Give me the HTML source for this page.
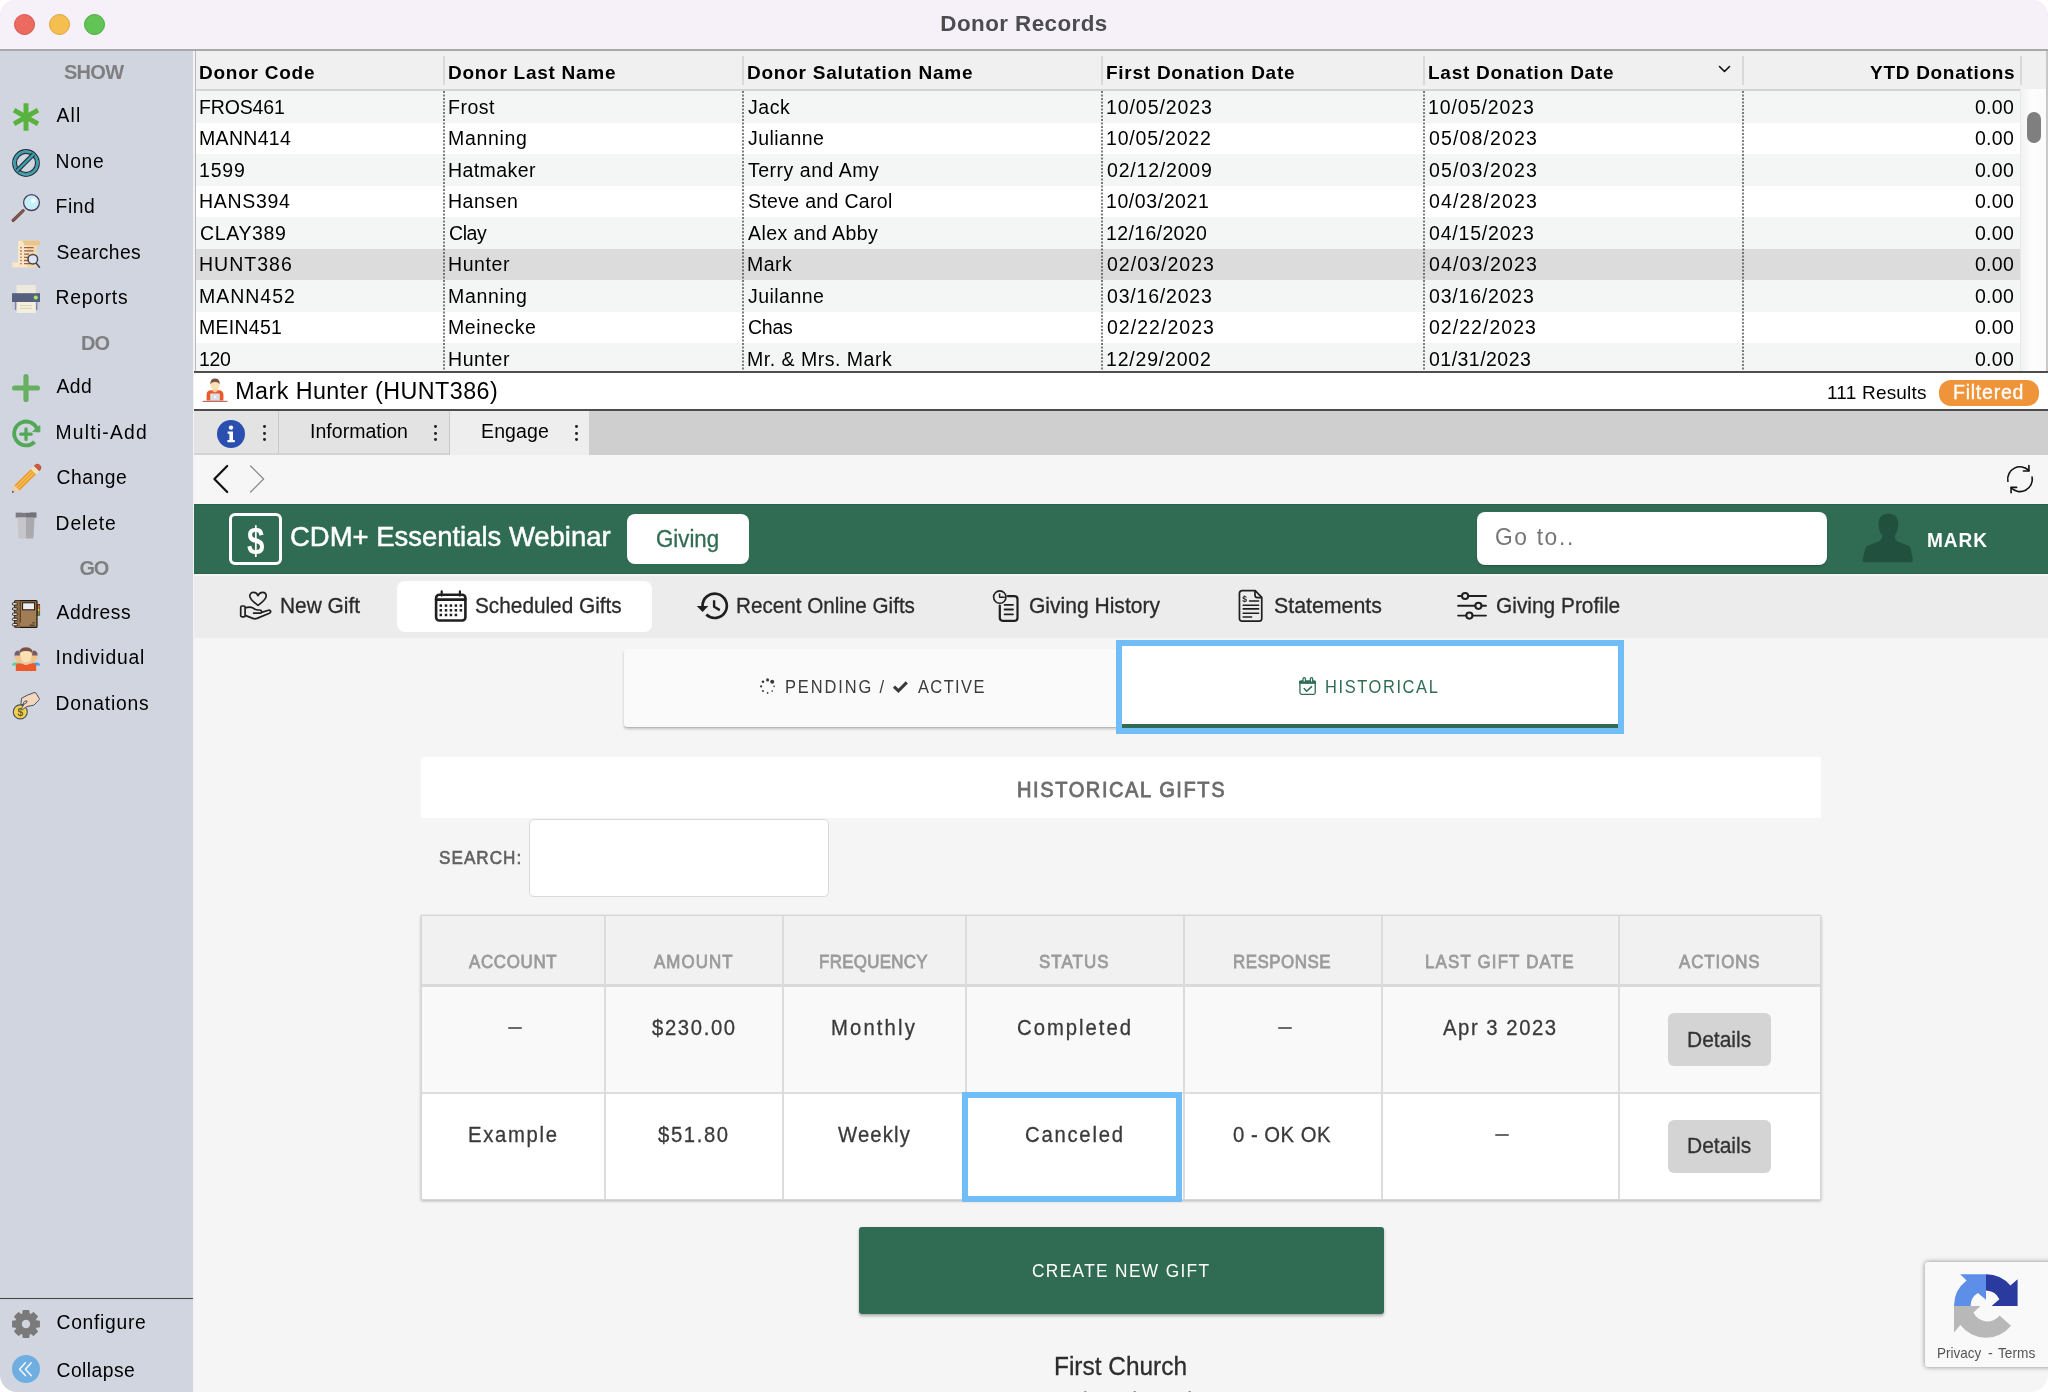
<!DOCTYPE html>
<html lang="en"><head><meta charset="utf-8"><title>Donor Records</title>
<style>

*{box-sizing:border-box;margin:0;padding:0}
html,body{width:2048px;height:1392px;overflow:hidden;background:#fff}
body{font-family:"Liberation Sans",sans-serif;position:relative;color:#000}
.win{will-change:transform;position:absolute;left:0;top:0;width:2048px;height:1392px;border-radius:15px 15px 17px 17px;background:#f5f5f5;overflow:hidden}
.a{position:absolute}
.t{position:absolute;white-space:nowrap}
svg{position:absolute;overflow:visible}

</style></head>
<body>
<div class="win">
<div class="a" style="left:0;top:0;width:2048px;height:49px;background:#f6f1f8"></div>
<div class="a" style="left:0;top:49px;width:2048px;height:2px;background:#a9a9aa"></div>
<div class="a" style="left:14.0px;top:14px;width:21px;height:21px;border-radius:50%;background:#ec6a5f;border:1px solid #d9534a"></div>
<div class="a" style="left:49.0px;top:14px;width:21px;height:21px;border-radius:50%;background:#f4bf50;border:1px solid #dba43a"></div>
<div class="a" style="left:84.0px;top:14px;width:21px;height:21px;border-radius:50%;background:#61c455;border:1px solid #4aa83f"></div>
<div class="t" style="top:9.1px;font-size:22.4px;line-height:29px;font-weight:700;color:#4c4c4e;letter-spacing:0.43px;left:724.0px;width:600px;text-align:center;">Donor Records</div>
<div class="a" style="left:0;top:51px;width:193px;height:1361px;background:#d1d5df"></div>
<div class="a" style="left:193px;top:51px;width:2px;height:1361px;background:#f3f3f5"></div>
<div class="a" style="left:0;top:1298px;width:193px;height:1px;background:#47484c;box-shadow:0 0 1px rgba(60,60,66,.5)"></div>
<div class="t" style="top:58.9px;font-size:20px;line-height:26px;font-weight:700;color:#7f7f7f;letter-spacing:-0.65px;left:63.9px;">SHOW</div>
<div class="t" style="top:330.1px;font-size:20px;line-height:26px;font-weight:700;color:#7f7f7f;letter-spacing:-0.94px;left:80.9px;">DO</div>
<div class="t" style="top:555.3px;font-size:20px;line-height:26px;font-weight:700;color:#7f7f7f;letter-spacing:-1.50px;left:79.6px;">GO</div>
<svg style="left:11.9px;top:103.0px" width="28" height="28" viewBox="0 0 28 28"><g stroke="#58b33e" stroke-width="4.9" stroke-linecap="butt"><path d="M14 0.2V27.8M2 7.1L26 20.9M2 20.9L26 7.1"/></g></svg>
<div class="t" style="top:103.4px;font-size:19.3px;line-height:25px;letter-spacing:1.12px;left:56.6px;">All</div>
<svg style="left:11.9px;top:148.5px" width="28" height="28" viewBox="0 0 28 28"><circle cx="14" cy="14" r="13.2" fill="none" stroke="#22343a" stroke-width="1.4"/><circle cx="14" cy="14" r="11.3" fill="none" stroke="#3f9fae" stroke-width="2.6"/><circle cx="14" cy="14" r="9.6" fill="none" stroke="#22343a" stroke-width="1.2"/><path d="M21.6 5.2L5.2 21.6" stroke="#22343a" stroke-width="4.6"/><path d="M22 4.8L4.8 22" stroke="#3f9fae" stroke-width="2.4"/></svg>
<div class="t" style="top:148.9px;font-size:19.3px;line-height:25px;letter-spacing:0.67px;left:55.6px;">None</div>
<svg style="left:11.9px;top:194.0px" width="28" height="28" viewBox="0 0 28 28"><path d="M1.2 26.3L11.2 16.6" stroke="#6a4540" stroke-width="3.2" stroke-linecap="round"/><path d="M1.6 26L11 16.8" stroke="#8a5a4c" stroke-width="1.6" stroke-linecap="round"/><circle cx="19.5" cy="8.6" r="7.9" fill="#c5f0fa" stroke="#4a3c5a" stroke-width="1.3"/><circle cx="21.3" cy="6.8" r="2.3" fill="#fff"/></svg>
<div class="t" style="top:194.4px;font-size:19.3px;line-height:25px;letter-spacing:0.54px;left:55.6px;">Find</div>
<svg style="left:11.9px;top:239.5px" width="28" height="28" viewBox="0 0 28 28"><path d="M6 2.5Q6 0.6 8 0.6H26Q28 0.6 28 2.6V5.2H24.5V25.5Q24.5 27.6 22.5 27.6H2Q0.3 27.6 0.3 25.6V22.4H6Z" fill="#fbe7c6"/><path d="M15 0.6H26Q28 0.6 28 2.6V5.2H24.5V25.5Q24.5 27.6 22.5 27.6H15Z" fill="#f2d2a0" opacity=".75"/><path d="M8 0.6H26Q28 0.6 28 2.6V5.2H12Q12 0.6 8 0.6Z" fill="#e8c48e"/><g stroke="#9a5f45" stroke-width="1.3"><path d="M12 7.7H21.5M12 10.9H21.5M12 14.1H17M12 17.3H16M12 20.5H16M12 23.7H19"/></g><g fill="#9a5f45"><circle cx="9" cy="7.7" r=".8"/><circle cx="9" cy="10.9" r=".8"/><circle cx="9" cy="14.1" r=".8"/><circle cx="9" cy="17.3" r=".8"/><circle cx="9" cy="20.5" r=".8"/><circle cx="9" cy="23.7" r=".8"/></g><path d="M24 23L27.5 27.2" stroke="#3f444d" stroke-width="1.6" stroke-linecap="round"/><circle cx="20.8" cy="19.2" r="4.8" fill="#dfe3f2" stroke="#3f444d" stroke-width="1.5"/></svg>
<div class="t" style="top:239.9px;font-size:19.3px;line-height:25px;letter-spacing:0.37px;left:56.6px;">Searches</div>
<svg style="left:11.9px;top:285.0px" width="28" height="28" viewBox="0 0 28 28"><rect x="4.6" y="0" width="19.2" height="9" fill="#edeadb"/><rect x="0" y="17" width="28" height="7" fill="#cfd0cf"/><rect x="2.8" y="17" width="1.8" height="8" fill="#7b86bd"/><rect x="23.6" y="17" width="1.8" height="8" fill="#7b86bd"/><rect x="0" y="8.2" width="28" height="8.8" fill="#565f7e"/><rect x="4.6" y="17" width="19.2" height="11" fill="#f3efdc"/><path d="M8 20.6H20M8 23.4H20" stroke="#d6d2b2" stroke-width="1"/><circle cx="23.8" cy="12.6" r="2.1" fill="#a5e861"/></svg>
<div class="t" style="top:285.4px;font-size:19.3px;line-height:25px;letter-spacing:0.75px;left:55.6px;">Reports</div>
<svg style="left:11.9px;top:374.0px" width="28" height="28" viewBox="0 0 28 28"><path d="M14 2.6V25.4M2.6 14H25.4" stroke="#67b061" stroke-width="5.2" stroke-linecap="round"/></svg>
<div class="t" style="top:374.4px;font-size:19.3px;line-height:25px;letter-spacing:0.41px;left:56.6px;">Add</div>
<svg style="left:11.9px;top:419.5px" width="28" height="28" viewBox="0 0 28 28"><path d="M22.6 21.8A11.9 11.9 0 1 1 25.8 11.2" fill="none" stroke="#52a856" stroke-width="3.8"/><path d="M20.6 11.6L27.9 5.6V11.9Z" fill="#52a856" stroke="#52a856" stroke-width=".8" stroke-linejoin="round"/><path d="M14 9V19.4M8.8 14.2H19.2" stroke="#52a856" stroke-width="3.3" stroke-linecap="round"/></svg>
<div class="t" style="top:419.9px;font-size:19.3px;line-height:25px;letter-spacing:1.21px;left:55.6px;">Multi-Add</div>
<svg style="left:11.9px;top:465.0px" width="28" height="28" viewBox="0 0 28 28"><g transform="rotate(-44.5 14 14)"><path d="M-5.8 14L1.6 10.4V17.6Z" fill="#f6cfa0"/><path d="M-5.8 14L-3.6 12.95V15.05Z" fill="#3a3f48"/><rect x="1.4" y="10.4" width="23.2" height="7.2" fill="#ee9a33"/><rect x="1.4" y="12.2" width="23.2" height="1.1" fill="#f2cc55"/><rect x="1.4" y="14.7" width="23.2" height="1.1" fill="#f2cc55"/><rect x="24.6" y="10.2" width="4.2" height="7.6" fill="#f0ecc4"/><path d="M25.8 10.2V17.8M27.4 10.2V17.8" stroke="#e1d9a0" stroke-width=".6"/><path d="M28.8 10.2H30A3.8 3.8 0 0 1 30 17.8H28.8Z" fill="#c85a48"/></g></svg>
<div class="t" style="top:465.4px;font-size:19.3px;line-height:25px;letter-spacing:0.52px;left:56.6px;">Change</div>
<svg style="left:11.9px;top:511.29999999999995px" width="28" height="28" viewBox="0 0 28 28"><rect x="3.7" y="1.6" width="20.6" height="5" fill="#7c7a82"/><rect x="14" y="1.6" width="10.3" height="5" fill="#73717a"/><path d="M5.4 6.6H14V27.6H6.6Z" fill="#c6c5c9"/><path d="M14 6.6H22.6L21.4 27.6H14Z" fill="#aaa9ae"/><rect x="10" y="0.6" width="8" height="1" fill="#d8d6d2"/></svg>
<div class="t" style="top:510.9px;font-size:19.3px;line-height:25px;letter-spacing:0.87px;left:55.6px;">Delete</div>
<svg style="left:11.9px;top:599.5px" width="28" height="28" viewBox="0 0 28 28"><rect x="25" y="4.4" width="2.8" height="10.8" fill="#8a5a34" stroke="#20160e" stroke-width=".5"/><rect x="25.6" y="5.2" width="1.8" height="2.8" fill="#e86a2a"/><rect x="25.6" y="8.6" width="1.8" height="2.8" fill="#f2c233"/><rect x="25.6" y="12" width="1.8" height="2.8" fill="#3fae49"/><rect x="2.6" y="0.6" width="22.4" height="26.8" rx="1" fill="#a07d55" stroke="#20160e" stroke-width="1.2"/><rect x="2.6" y="0.6" width="5.6" height="26.8" fill="#8c6b45"/><path d="M8.4 1.4V22.6" stroke="#5f4428" stroke-width="1.2"/><rect x="10.6" y="2.8" width="12" height="7" fill="#eceff2" stroke="#20160e" stroke-width="1"/><path d="M17.6 25.2H22.8M20.4 22.8H22.8" stroke="#3a2a18" stroke-width="1"/><g fill="#e8eaec" stroke="#20160e" stroke-width=".9"><rect x="0.4" y="2.6" width="5" height="2.4" rx="1.2"/><rect x="0.4" y="7.8" width="5" height="2.4" rx="1.2"/><rect x="0.4" y="13" width="5" height="2.4" rx="1.2"/><rect x="0.4" y="18.2" width="5" height="2.4" rx="1.2"/><rect x="0.4" y="23.4" width="5" height="2.4" rx="1.2"/></g></svg>
<div class="t" style="top:599.9px;font-size:19.3px;line-height:25px;letter-spacing:0.55px;left:56.6px;">Address</div>
<svg style="left:11.9px;top:645.0px" width="28" height="28" viewBox="0 0 28 28"><path d="M0 20.6Q0 17.4 3.4 17.4H8V20.6Z" fill="#5fd48a"/><path d="M28 20.6Q28 17.4 24.6 17.4H20V20.6Z" fill="#45a4f2"/><ellipse cx="6.6" cy="11.6" rx="4" ry="4.8" fill="#f3c48a"/><path d="M2.4 10.6Q2.4 5.6 6.8 5.6L8 10.6Z" fill="#6f6076"/><ellipse cx="21.4" cy="11.6" rx="4" ry="4.8" fill="#f3c48a"/><path d="M25.6 10.6Q25.6 5.6 21.2 5.6L20 10.6Z" fill="#7a5a62"/><rect x="5" y="13.6" width="4" height="4.4" fill="#f3c48a"/><rect x="19" y="13.6" width="4" height="4.4" fill="#f3c48a"/><path d="M3.8 25.4V20.6Q3.8 18.4 6.4 18.4H21.6Q24.2 18.4 24.2 20.6V25.4Q24.2 26 23.4 26H4.6Q3.8 26 3.8 25.4Z" fill="#ec5a2c"/><path d="M10.4 15.6H17.6V18.6Q14 21.6 10.4 18.6Z" fill="#f5c896"/><ellipse cx="14" cy="10.4" rx="5.6" ry="6.8" fill="#fae2b4"/><path d="M7 9.4Q6.6 2.4 14 2.2Q21.4 2.4 21 9.4Q19.4 5.8 14 6Q8.6 5.8 7 9.4Z" fill="#7b5145"/></svg>
<div class="t" style="top:645.4px;font-size:19.3px;line-height:25px;letter-spacing:0.80px;left:55.6px;">Individual</div>
<svg style="left:11.9px;top:690.5px" width="28" height="28" viewBox="0 0 28 28"><circle cx="8.3" cy="20.9" r="7" fill="#f2d04a" stroke="#46525c" stroke-width="1.1"/><text x="5.4" y="24.6" font-family="Liberation Sans, sans-serif" font-size="10.5" font-weight="700" fill="#6a6330">$</text><path d="M8.8 13.6L9.6 7.2L15.4 4.2L22 1.6Q23.2 1.2 24 2.2L27.2 7.4Q27.6 8.4 26.8 9.2L21.8 14.2L14.6 15.6L10.6 18.6Q9.6 18.8 9.6 17.6L11.8 13.4Z" fill="#f5d7be" stroke="#46525c" stroke-width="1" stroke-linejoin="round"/><ellipse cx="13.2" cy="11.4" rx="2.2" ry="1.1" transform="rotate(-35 13.2 11.4)" fill="#d1d5df" stroke="#46525c" stroke-width=".9"/></svg>
<div class="t" style="top:690.9px;font-size:19.3px;line-height:25px;letter-spacing:0.78px;left:55.6px;">Donations</div>
<svg style="left:11.9px;top:1310.0px" width="28" height="28" viewBox="0 0 28 28"><path fill-rule="evenodd" d="M11.16 0.70L16.84 0.70L17.17 4.10L18.76 4.75L21.40 2.59L25.41 6.60L23.25 9.24L23.90 10.83L27.30 11.16L27.30 16.84L23.90 17.17L23.25 18.76L25.41 21.40L21.40 25.41L18.76 23.25L17.17 23.90L16.84 27.30L11.16 27.30L10.83 23.90L9.24 23.25L6.60 25.41L2.59 21.40L4.75 18.76L4.10 17.17L0.70 16.84L0.70 11.16L4.10 10.83L4.75 9.24L2.59 6.60L6.60 2.59L9.24 4.75L10.83 4.10ZM14 9.2A4.8 4.8 0 1 0 14 18.8A4.8 4.8 0 1 0 14 9.2Z" fill="#7a7a7a" stroke="#7a7a7a" stroke-width="1.2" stroke-linejoin="round"/></svg>
<div class="t" style="top:1310.4px;font-size:19.3px;line-height:25px;letter-spacing:0.69px;left:56.6px;">Configure</div>
<svg style="left:11.9px;top:1355.4px" width="28" height="28" viewBox="0 0 28 28"><circle cx="14" cy="14" r="14" fill="#6faee0"/><path d="M13.4 7.8L7.6 14.2L13.4 20.6M19.2 7.8L13.4 14.2L19.2 20.6" fill="none" stroke="#f2f8fd" stroke-width="1.5" stroke-linecap="round" stroke-linejoin="round"/></svg>
<div class="t" style="top:1357.6px;font-size:19.3px;line-height:25px;letter-spacing:0.44px;left:56.6px;">Collapse</div>
<div class="a" style="left:195px;top:51px;width:1853px;height:320px;background:#fff;border-left:1px solid #b9b9b9"></div>
<div class="a" style="left:196px;top:51px;width:1852px;height:39px;background:#f0f0f0"></div>
<div class="a" style="left:196px;top:89px;width:1852px;height:2px;background:#d3d3d3"></div>
<div class="a" style="left:196px;top:91.0px;width:1824px;height:31.5px;background:#f4f5f5"></div>
<div class="a" style="left:196px;top:122.5px;width:1824px;height:31.5px;background:#fff"></div>
<div class="a" style="left:196px;top:154.0px;width:1824px;height:31.5px;background:#f4f5f5"></div>
<div class="a" style="left:196px;top:185.5px;width:1824px;height:31.5px;background:#fff"></div>
<div class="a" style="left:196px;top:217.0px;width:1824px;height:31.5px;background:#f4f5f5"></div>
<div class="a" style="left:196px;top:248.5px;width:1824px;height:31.5px;background:#dcdcdc"></div>
<div class="a" style="left:196px;top:280.0px;width:1824px;height:31.5px;background:#f4f5f5"></div>
<div class="a" style="left:196px;top:311.5px;width:1824px;height:31.5px;background:#fff"></div>
<div class="a" style="left:196px;top:343.0px;width:1824px;height:28px;background:#f4f5f5"></div>
<div class="a" style="left:2020px;top:51px;width:28px;height:320px;background:linear-gradient(90deg,#f2f2f2,#fdfdfd 40%,#fafafa);border-left:1px solid #e8e8e8"></div>
<div class="a" style="left:2020px;top:51px;width:28px;height:38px;background:#f0f0f0"></div>
<div class="a" style="left:2027px;top:112px;width:14px;height:31px;border-radius:7px;background:#7f7f7f"></div>
<div class="a" style="left:2046px;top:51px;width:2px;height:320px;background:#c8c8c8"></div>
<div class="a" style="left:2020px;top:56px;width:2px;height:29px;background:#d9d9d9"></div>
<div class="a" style="left:443px;top:56px;width:2px;height:29px;background:#d9d9d9"></div>
<div class="a" style="left:443px;top:91px;width:2px;height:280px;background:repeating-linear-gradient(180deg,rgba(50,50,50,0.62) 0px,rgba(50,50,50,0.62) 1px,rgba(50,50,50,0.62) 1px,rgba(50,50,50,0.62) 2px,rgba(50,50,50,0) 2px,rgba(50,50,50,0) 3px,rgba(50,50,50,0.31) 3px,rgba(50,50,50,0.31) 4px,rgba(50,50,50,0.62) 4px,rgba(50,50,50,0.62) 5px,rgba(50,50,50,0.31) 5px,rgba(50,50,50,0.31) 6px,rgba(50,50,50,0) 6px,rgba(50,50,50,0) 7px)"></div>
<div class="a" style="left:742px;top:56px;width:2px;height:29px;background:#d9d9d9"></div>
<div class="a" style="left:742px;top:91px;width:2px;height:280px;background:repeating-linear-gradient(180deg,rgba(50,50,50,0.62) 0px,rgba(50,50,50,0.62) 1px,rgba(50,50,50,0.62) 1px,rgba(50,50,50,0.62) 2px,rgba(50,50,50,0) 2px,rgba(50,50,50,0) 3px,rgba(50,50,50,0.31) 3px,rgba(50,50,50,0.31) 4px,rgba(50,50,50,0.62) 4px,rgba(50,50,50,0.62) 5px,rgba(50,50,50,0.31) 5px,rgba(50,50,50,0.31) 6px,rgba(50,50,50,0) 6px,rgba(50,50,50,0) 7px)"></div>
<div class="a" style="left:1101px;top:56px;width:2px;height:29px;background:#d9d9d9"></div>
<div class="a" style="left:1101px;top:91px;width:2px;height:280px;background:repeating-linear-gradient(180deg,rgba(50,50,50,0.62) 0px,rgba(50,50,50,0.62) 1px,rgba(50,50,50,0.62) 1px,rgba(50,50,50,0.62) 2px,rgba(50,50,50,0) 2px,rgba(50,50,50,0) 3px,rgba(50,50,50,0.31) 3px,rgba(50,50,50,0.31) 4px,rgba(50,50,50,0.62) 4px,rgba(50,50,50,0.62) 5px,rgba(50,50,50,0.31) 5px,rgba(50,50,50,0.31) 6px,rgba(50,50,50,0) 6px,rgba(50,50,50,0) 7px)"></div>
<div class="a" style="left:1423px;top:56px;width:2px;height:29px;background:#d9d9d9"></div>
<div class="a" style="left:1423px;top:91px;width:2px;height:280px;background:repeating-linear-gradient(180deg,rgba(50,50,50,0.62) 0px,rgba(50,50,50,0.62) 1px,rgba(50,50,50,0.62) 1px,rgba(50,50,50,0.62) 2px,rgba(50,50,50,0) 2px,rgba(50,50,50,0) 3px,rgba(50,50,50,0.31) 3px,rgba(50,50,50,0.31) 4px,rgba(50,50,50,0.62) 4px,rgba(50,50,50,0.62) 5px,rgba(50,50,50,0.31) 5px,rgba(50,50,50,0.31) 6px,rgba(50,50,50,0) 6px,rgba(50,50,50,0) 7px)"></div>
<div class="a" style="left:1742px;top:56px;width:2px;height:29px;background:#d9d9d9"></div>
<div class="a" style="left:1742px;top:91px;width:2px;height:280px;background:repeating-linear-gradient(180deg,rgba(50,50,50,0.62) 0px,rgba(50,50,50,0.62) 1px,rgba(50,50,50,0.62) 1px,rgba(50,50,50,0.62) 2px,rgba(50,50,50,0) 2px,rgba(50,50,50,0) 3px,rgba(50,50,50,0.31) 3px,rgba(50,50,50,0.31) 4px,rgba(50,50,50,0.62) 4px,rgba(50,50,50,0.62) 5px,rgba(50,50,50,0.31) 5px,rgba(50,50,50,0.31) 6px,rgba(50,50,50,0) 6px,rgba(50,50,50,0) 7px)"></div>
<div class="t" style="top:94.7px;font-size:19.5px;line-height:25px;letter-spacing:-0.14px;left:199.0px;">FROS461</div>
<div class="t" style="top:94.7px;font-size:19.5px;line-height:25px;letter-spacing:0.50px;left:448.0px;">Frost</div>
<div class="t" style="top:94.7px;font-size:19.5px;line-height:25px;letter-spacing:0.55px;left:748.0px;">Jack</div>
<div class="t" style="top:94.7px;font-size:19.5px;line-height:25px;letter-spacing:0.92px;left:1106.0px;">10/05/2023</div>
<div class="t" style="top:94.7px;font-size:19.5px;line-height:25px;letter-spacing:0.92px;left:1428.0px;">10/05/2023</div>
<div class="t" style="top:94.7px;font-size:19.5px;line-height:25px;letter-spacing:0.30px;right:33.9px;">0.00</div>
<div class="t" style="top:126.2px;font-size:19.5px;line-height:25px;letter-spacing:0.32px;left:199.0px;">MANN414</div>
<div class="t" style="top:126.2px;font-size:19.5px;line-height:25px;letter-spacing:0.67px;left:448.0px;">Manning</div>
<div class="t" style="top:126.2px;font-size:19.5px;line-height:25px;letter-spacing:0.46px;left:748.0px;">Julianne</div>
<div class="t" style="top:126.2px;font-size:19.5px;line-height:25px;letter-spacing:0.80px;left:1106.0px;">10/05/2022</div>
<div class="t" style="top:126.2px;font-size:19.5px;line-height:25px;letter-spacing:1.14px;left:1429.0px;">05/08/2023</div>
<div class="t" style="top:126.2px;font-size:19.5px;line-height:25px;letter-spacing:0.30px;right:33.9px;">0.00</div>
<div class="t" style="top:157.7px;font-size:19.5px;line-height:25px;letter-spacing:0.82px;left:199.0px;">1599</div>
<div class="t" style="top:157.7px;font-size:19.5px;line-height:25px;letter-spacing:0.42px;left:448.0px;">Hatmaker</div>
<div class="t" style="top:157.7px;font-size:19.5px;line-height:25px;letter-spacing:0.51px;left:748.0px;">Terry and Amy</div>
<div class="t" style="top:157.7px;font-size:19.5px;line-height:25px;letter-spacing:0.80px;left:1107.0px;">02/12/2009</div>
<div class="t" style="top:157.7px;font-size:19.5px;line-height:25px;letter-spacing:1.14px;left:1429.0px;">05/03/2023</div>
<div class="t" style="top:157.7px;font-size:19.5px;line-height:25px;letter-spacing:0.30px;right:33.9px;">0.00</div>
<div class="t" style="top:189.2px;font-size:19.5px;line-height:25px;letter-spacing:0.69px;left:199.0px;">HANS394</div>
<div class="t" style="top:189.2px;font-size:19.5px;line-height:25px;letter-spacing:0.53px;left:448.0px;">Hansen</div>
<div class="t" style="top:189.2px;font-size:19.5px;line-height:25px;letter-spacing:0.32px;left:748.0px;">Steve and Carol</div>
<div class="t" style="top:189.2px;font-size:19.5px;line-height:25px;letter-spacing:0.58px;left:1106.0px;">10/03/2021</div>
<div class="t" style="top:189.2px;font-size:19.5px;line-height:25px;letter-spacing:1.14px;left:1429.0px;">04/28/2023</div>
<div class="t" style="top:189.2px;font-size:19.5px;line-height:25px;letter-spacing:0.30px;right:33.9px;">0.00</div>
<div class="t" style="top:220.7px;font-size:19.5px;line-height:25px;letter-spacing:0.64px;left:200.0px;">CLAY389</div>
<div class="t" style="top:220.7px;font-size:19.5px;line-height:25px;letter-spacing:-0.42px;left:449.0px;">Clay</div>
<div class="t" style="top:220.7px;font-size:19.5px;line-height:25px;letter-spacing:0.42px;left:748.0px;">Alex and Abby</div>
<div class="t" style="top:220.7px;font-size:19.5px;line-height:25px;letter-spacing:0.36px;left:1106.0px;">12/16/2020</div>
<div class="t" style="top:220.7px;font-size:19.5px;line-height:25px;letter-spacing:0.80px;left:1429.0px;">04/15/2023</div>
<div class="t" style="top:220.7px;font-size:19.5px;line-height:25px;letter-spacing:0.30px;right:33.9px;">0.00</div>
<div class="t" style="top:252.2px;font-size:19.5px;line-height:25px;letter-spacing:1.02px;left:199.0px;">HUNT386</div>
<div class="t" style="top:252.2px;font-size:19.5px;line-height:25px;letter-spacing:0.59px;left:448.0px;">Hunter</div>
<div class="t" style="top:252.2px;font-size:19.5px;line-height:25px;letter-spacing:0.47px;left:747.0px;">Mark</div>
<div class="t" style="top:252.2px;font-size:19.5px;line-height:25px;letter-spacing:1.03px;left:1107.0px;">02/03/2023</div>
<div class="t" style="top:252.2px;font-size:19.5px;line-height:25px;letter-spacing:1.14px;left:1429.0px;">04/03/2023</div>
<div class="t" style="top:252.2px;font-size:19.5px;line-height:25px;letter-spacing:0.30px;right:33.9px;">0.00</div>
<div class="t" style="top:283.7px;font-size:19.5px;line-height:25px;letter-spacing:0.98px;left:199.0px;">MANN452</div>
<div class="t" style="top:283.7px;font-size:19.5px;line-height:25px;letter-spacing:0.67px;left:448.0px;">Manning</div>
<div class="t" style="top:283.7px;font-size:19.5px;line-height:25px;letter-spacing:0.46px;left:748.0px;">Juilanne</div>
<div class="t" style="top:283.7px;font-size:19.5px;line-height:25px;letter-spacing:0.80px;left:1107.0px;">03/16/2023</div>
<div class="t" style="top:283.7px;font-size:19.5px;line-height:25px;letter-spacing:0.80px;left:1429.0px;">03/16/2023</div>
<div class="t" style="top:283.7px;font-size:19.5px;line-height:25px;letter-spacing:0.30px;right:33.9px;">0.00</div>
<div class="t" style="top:315.2px;font-size:19.5px;line-height:25px;letter-spacing:0.26px;left:199.0px;">MEIN451</div>
<div class="t" style="top:315.2px;font-size:19.5px;line-height:25px;letter-spacing:0.63px;left:448.0px;">Meinecke</div>
<div class="t" style="top:315.2px;font-size:19.5px;line-height:25px;letter-spacing:-0.26px;left:748.0px;">Chas</div>
<div class="t" style="top:315.2px;font-size:19.5px;line-height:25px;letter-spacing:1.03px;left:1107.0px;">02/22/2023</div>
<div class="t" style="top:315.2px;font-size:19.5px;line-height:25px;letter-spacing:1.03px;left:1429.0px;">02/22/2023</div>
<div class="t" style="top:315.2px;font-size:19.5px;line-height:25px;letter-spacing:0.30px;right:33.9px;">0.00</div>
<div class="t" style="top:346.7px;font-size:19.5px;line-height:25px;letter-spacing:-0.35px;left:199.0px;">120</div>
<div class="t" style="top:346.7px;font-size:19.5px;line-height:25px;letter-spacing:0.59px;left:448.0px;">Hunter</div>
<div class="t" style="top:346.7px;font-size:19.5px;line-height:25px;letter-spacing:0.51px;left:747.0px;">Mr. &amp; Mrs. Mark</div>
<div class="t" style="top:346.7px;font-size:19.5px;line-height:25px;letter-spacing:0.80px;left:1106.0px;">12/29/2002</div>
<div class="t" style="top:346.7px;font-size:19.5px;line-height:25px;letter-spacing:0.47px;left:1429.0px;">01/31/2023</div>
<div class="t" style="top:346.7px;font-size:19.5px;line-height:25px;letter-spacing:0.30px;right:33.9px;">0.00</div>
<div class="t" style="top:59.5px;font-size:19px;line-height:25px;font-weight:700;letter-spacing:0.76px;left:199.0px;">Donor Code</div>
<div class="t" style="top:59.5px;font-size:19px;line-height:25px;font-weight:700;letter-spacing:0.73px;left:448.0px;">Donor Last Name</div>
<div class="t" style="top:59.5px;font-size:19px;line-height:25px;font-weight:700;letter-spacing:0.77px;left:747.0px;">Donor Salutation Name</div>
<div class="t" style="top:59.5px;font-size:19px;line-height:25px;font-weight:700;letter-spacing:0.74px;left:1106.0px;">First Donation Date</div>
<div class="t" style="top:59.5px;font-size:19px;line-height:25px;font-weight:700;letter-spacing:0.73px;left:1428.0px;">Last Donation Date</div>
<div class="t" style="top:59.5px;font-size:19px;line-height:25px;font-weight:700;letter-spacing:0.70px;right:32.7px;">YTD Donations</div>
<svg style="left:1717.6px;top:65.2px" width="13" height="9" viewBox="0 0 13 9"><path d="M1.5 1.5L6.5 6.5L11.5 1.5" fill="none" stroke="#111" stroke-width="1.6" stroke-linecap="round" stroke-linejoin="round"/></svg>
<div class="a" style="left:194px;top:371px;width:1854px;height:2px;background:#4d4d4d"></div>
<div class="a" style="left:194px;top:373px;width:1854px;height:36px;background:#fff"></div>
<div class="a" style="left:194px;top:409px;width:1854px;height:2px;background:#4d4d4d"></div>
<svg style="left:202px;top:377.6px" width="26" height="25" viewBox="0 0 26 25"><path d="M4.6 22.6V16.8Q4.6 12.2 9.2 12.2H16.8Q21.4 12.2 21.4 16.8V22.6Z" fill="#ec5a2c"/><path d="M10.6 10.4H15.4V13Q13 15.4 10.6 13Z" fill="#f5c896"/><ellipse cx="13" cy="7" rx="4.4" ry="5" fill="#fae2b4"/><path d="M8.4 6.4Q8 0.6 13 0.6Q18 0.6 17.6 6.4Q16.4 3.8 13 4Q9.6 3.8 8.4 6.4Z" fill="#7b5145"/><rect x="8.2" y="15.4" width="9.6" height="7" rx=".8" fill="#d9dde8"/><circle cx="13" cy="18.9" r="1" fill="#fff"/><path d="M0.6 23.4H25.4" stroke="#b9705f" stroke-width="1.2"/></svg>
<div class="t" style="top:375.8px;font-size:23.3px;line-height:30px;letter-spacing:0.44px;left:235.2px;">Mark Hunter (HUNT386)</div>
<div class="t" style="top:379.5px;font-size:19px;line-height:25px;letter-spacing:0.20px;left:1827.0px;">111 Results</div>
<div class="a" style="left:1939px;top:379.5px;width:100.4px;height:26px;border-radius:12px;background:#f09439"></div>
<div class="t" style="top:379.7px;font-size:19.5px;line-height:25px;color:#fff;letter-spacing:0.76px;left:1953.0px;-webkit-text-stroke:.35px #fff;">Filtered</div>
<div class="a" style="left:194px;top:411px;width:1854px;height:44px;background:#cfcfcf"></div>
<div class="a" style="left:194px;top:411px;width:85px;height:44px;background:#e3e3e3;border-right:1px solid #c9c9c9;border-bottom:2px solid #d2d2d2"></div>
<div class="a" style="left:279px;top:411px;width:171px;height:44px;background:#e3e3e3;border-right:1px solid #c9c9c9;border-bottom:2px solid #d2d2d2"></div>
<div class="a" style="left:450px;top:411px;width:139px;height:44px;background:#eeeeee"></div>
<div class="a" style="left:217px;top:419.7px;width:28px;height:28px;border-radius:50%;background:#2a4fb0"></div>
<svg style="left:217px;top:419.7px" width="28" height="28" viewBox="0 0 28 28"><circle cx="14" cy="7.6" r="2.2" fill="#fff"/><path d="M10.6 11.6H16V20H17.8V22.2H10.4V20H12.4V13.8H10.6Z" fill="#fff"/></svg>
<div class="a" style="left:262.65px;top:425.35px;width:2.9px;height:2.9px;border-radius:50%;background:#222"></div>
<div class="a" style="left:262.65px;top:431.75px;width:2.9px;height:2.9px;border-radius:50%;background:#222"></div>
<div class="a" style="left:262.65px;top:438.15px;width:2.9px;height:2.9px;border-radius:50%;background:#222"></div>
<div class="a" style="left:433.65px;top:425.35px;width:2.9px;height:2.9px;border-radius:50%;background:#222"></div>
<div class="a" style="left:433.65px;top:431.75px;width:2.9px;height:2.9px;border-radius:50%;background:#222"></div>
<div class="a" style="left:433.65px;top:438.15px;width:2.9px;height:2.9px;border-radius:50%;background:#222"></div>
<div class="a" style="left:574.65px;top:425.35px;width:2.9px;height:2.9px;border-radius:50%;background:#222"></div>
<div class="a" style="left:574.65px;top:431.75px;width:2.9px;height:2.9px;border-radius:50%;background:#222"></div>
<div class="a" style="left:574.65px;top:438.15px;width:2.9px;height:2.9px;border-radius:50%;background:#222"></div>
<div class="t" style="top:418.5px;font-size:19.5px;line-height:25px;letter-spacing:0.03px;left:310.0px;">Information</div>
<div class="t" style="top:418.5px;font-size:19.5px;line-height:25px;letter-spacing:0.12px;left:481.0px;">Engage</div>
<div class="a" style="left:194px;top:455px;width:1854px;height:49px;background:#f6f6f6"></div>
<svg style="left:210px;top:462px" width="60" height="34" viewBox="0 0 60 34"><path d="M17.2 4L4.4 17L17.2 30" fill="none" stroke="#111" stroke-width="2.2" stroke-linecap="round" stroke-linejoin="round"/><path d="M40.6 4L53.6 17L40.6 30" fill="none" stroke="#8c8c8c" stroke-width="1.3" stroke-linecap="round" stroke-linejoin="round"/></svg>
<svg style="left:2005px;top:464px" width="30" height="30" viewBox="0 0 30 30"><g fill="none" stroke="#111" stroke-width="1.6" stroke-linecap="round" stroke-linejoin="round"><path d="M2.9 17.3A12.3 12.3 0 0 1 23.9 6.6"/><path d="M23.9 1.6V7H18.4"/><path d="M27.1 13.1A12.3 12.3 0 0 1 6.1 23.8"/><path d="M6.1 28.8V23.4H11.6"/></g></svg>
<div class="a" style="left:194px;top:504px;width:1854px;height:70px;background:#306c53;border-top:1px solid #2a6249;border-bottom:1px solid #28634a"></div>
<div class="a" style="left:229px;top:513.4px;width:53px;height:52px;border:3px solid #fff;border-radius:6px"></div>
<div class="t" style="top:515.0px;font-size:39px;line-height:51px;font-weight:700;color:#fff;left:246.8px;transform:scaleX(0.8041);transform-origin:left center;">$</div>
<div class="t" style="top:519.2px;font-size:28px;line-height:36px;color:#fff;left:290.3px;transform:scaleX(0.9803);transform-origin:left center;-webkit-text-stroke:.5px #fff;">CDM+ Essentials Webinar</div>
<div class="a" style="left:627px;top:513.6px;width:122px;height:50.4px;border-radius:8px;background:#fff"></div>
<div class="t" style="top:523.5px;font-size:23px;line-height:30px;color:#306c53;left:656.0px;transform:scaleX(0.9683);transform-origin:left center;-webkit-text-stroke:.3px #306c53;">Giving</div>
<div class="a" style="left:1477px;top:512px;width:350px;height:53px;border-radius:8px;background:#fff;box-shadow:0 1px 2px rgba(0,0,0,.25)"></div>
<div class="t" style="top:520.8px;font-size:24.5px;line-height:32px;color:#757575;letter-spacing:1.76px;left:1494.5px;transform:scaleX(0.9300);transform-origin:left center;">Go to..</div>
<svg style="left:1862px;top:513px" width="51" height="50" viewBox="0 0 51 50"><path d="M26.4 0.8C31.5 0.8 35.8 3.6 36 9C36.4 11 36.4 13 35.8 15C35 19 33.6 21 33 22.6L33 25.4C34 27.6 36 28.6 38.4 29.6L45.6 32.6C47.6 33.4 48.4 34.6 48.8 36.4L50.8 46.4C51 48.2 50.2 49.2 48.6 49.2L2.8 49.2C1.2 49.2 0.4 48.2 0.6 46.4L3 36.4C3.4 34.6 4.2 33.4 6.2 32.6L14 29.6C16.4 28.6 18.4 27.6 19.8 25.4L20.4 22.6C19 21 17.6 19 17 15C16.4 13 16.4 11 16.6 9C17 3.6 21.3 0.8 26.4 0.8Z" fill="#22503f"/></svg>
<div class="t" style="top:525.6px;font-size:20.5px;line-height:27px;font-weight:700;color:#fff;letter-spacing:0.99px;left:1926.9px;transform:scaleX(0.9300);transform-origin:left center;">MARK</div>
<div class="a" style="left:194px;top:574px;width:1854px;height:64px;background:#ececec;border-top:2px solid #f4f4f4"></div>
<div class="a" style="left:397px;top:581px;width:255px;height:51px;border-radius:8px;background:#fff"></div>
<div class="t" style="top:590.8px;font-size:22px;line-height:29px;color:#2b2b2b;left:280.1px;transform:scaleX(0.9490);transform-origin:left center;-webkit-text-stroke:.3px #2b2b2b;">New Gift</div>
<div class="t" style="top:590.8px;font-size:22px;line-height:29px;color:#2b2b2b;left:475.3px;transform:scaleX(0.9448);transform-origin:left center;-webkit-text-stroke:.3px #2b2b2b;">Scheduled Gifts</div>
<div class="t" style="top:590.8px;font-size:22px;line-height:29px;color:#2b2b2b;left:736.1px;transform:scaleX(0.9381);transform-origin:left center;-webkit-text-stroke:.3px #2b2b2b;">Recent Online Gifts</div>
<div class="t" style="top:590.8px;font-size:22px;line-height:29px;color:#2b2b2b;left:1029.0px;transform:scaleX(0.9564);transform-origin:left center;-webkit-text-stroke:.3px #2b2b2b;">Giving History</div>
<div class="t" style="top:590.8px;font-size:22px;line-height:29px;color:#2b2b2b;left:1274.0px;transform:scaleX(0.9702);transform-origin:left center;-webkit-text-stroke:.3px #2b2b2b;">Statements</div>
<div class="t" style="top:590.8px;font-size:22px;line-height:29px;color:#2b2b2b;left:1496.1px;transform:scaleX(0.9490);transform-origin:left center;-webkit-text-stroke:.3px #2b2b2b;">Giving Profile</div>
<svg style="left:239px;top:590px" width="34" height="32" viewBox="0 0 34 32"><g fill="none" stroke="#1f1f1f" stroke-width="1.7" stroke-linejoin="round" stroke-linecap="round"><path d="M19 15.4C13 11 10.8 8.6 10.8 6C10.8 3.6 12.6 2.3 14.4 2.3C16.4 2.3 18.2 3.6 19 5.6C19.8 3.6 21.6 2.3 23.6 2.3C25.4 2.3 27.2 3.6 27.2 6C27.2 8.6 25 11 19 15.4Z"/><rect x="1.7" y="16" width="4.4" height="10.9" rx="1.4"/><path d="M6.8 17.6C9 17 12 16.8 14 18L16.4 19.4C17 19.8 18 20 19 20H20.6C23 20 23.4 23.2 21 23.2H14.6"/><path d="M22.6 22.4L29.4 20.2C31.6 19.6 32.6 22.2 30.4 23.2L18 28.4C16.4 29 15.4 29 13.8 28.4L6.8 25.6"/></g></svg>
<svg style="left:434px;top:589px" width="33" height="34" viewBox="0 0 33 34"><g fill="none" stroke="#1f1f1f" stroke-width="2.6" stroke-linecap="round"><rect x="2.1" y="5.8" width="29.3" height="25.7" rx="3.2"/><path d="M2.1 10.6H31.4"/><path d="M7.7 2.4V6.6M25.9 2.4V6.6" stroke-width="2.2"/></g><g fill="#1f1f1f"><rect x="5.55" y="15.35" width="2.5" height="2.5"/><rect x="10.75" y="15.35" width="2.5" height="2.5"/><rect x="15.65" y="15.35" width="2.5" height="2.5"/><rect x="20.65" y="15.35" width="2.5" height="2.5"/><rect x="25.65" y="15.35" width="2.5" height="2.5"/><rect x="5.55" y="20.05" width="2.5" height="2.5"/><rect x="10.75" y="20.05" width="2.5" height="2.5"/><rect x="15.65" y="20.05" width="2.5" height="2.5"/><rect x="20.65" y="20.05" width="2.5" height="2.5"/><rect x="25.65" y="20.05" width="2.5" height="2.5"/><rect x="5.55" y="24.75" width="2.5" height="2.5"/><rect x="10.75" y="24.75" width="2.5" height="2.5"/><rect x="15.65" y="24.75" width="2.5" height="2.5"/><rect x="20.65" y="24.75" width="2.5" height="2.5"/></g></svg>
<svg style="left:696px;top:589px" width="34" height="33" viewBox="0 0 34 33"><g fill="none" stroke="#1f1f1f" stroke-width="2.7" stroke-linejoin="round"><path d="M6.55 17.2A12.15 12.15 0 1 1 10.3 25.6"/><path d="M18.1 11.2V17.8L23.8 21.1" stroke-width="2.4" stroke-linecap="butt"/></g><path d="M0.7 17.05H12.3L6.6 22.9Z" fill="#1f1f1f"/></svg>
<svg style="left:991px;top:589px" width="30" height="34" viewBox="0 0 30 34"><g fill="none" stroke="#1f1f1f" stroke-linecap="round" stroke-linejoin="round"><path d="M17 7.2H23.5Q26.5 7.2 26.5 10.2V28.8Q26.5 31.8 23.5 31.8H11.8Q8.8 31.8 8.8 28.8V16.6" stroke-width="2.2"/><path d="M13.6 15.8H22M13.6 20.5H22M13.6 25.3H22" stroke-width="1.8"/><circle cx="8.8" cy="8.1" r="6.2" stroke-width="1.6"/><path d="M8.6 4.4V8.2H13.8" stroke-width="1.5" stroke-linecap="butt"/></g></svg>
<svg style="left:1237px;top:589px" width="27" height="34" viewBox="0 0 27 34"><g fill="none" stroke="#1f1f1f" stroke-width="1.7" stroke-linecap="round" stroke-linejoin="round"><path d="M5.2 1.7H18.2L24.75 8.4V29.4Q24.75 32.1 22 32.1H5.2Q2.45 32.1 2.45 29.4V4.4Q2.45 1.7 5.2 1.7Z"/><path d="M18 2.2V6Q18 8.7 20.6 8.7H24.2"/><path d="M12.6 12H21.6M6.2 16.3H21.6M6.2 19.9H21.6M6.2 24.2H21.6M6.2 28H14.6" stroke-width="1.6"/></g><text x="5.2" y="12.6" font-family="Liberation Sans, sans-serif" font-size="8.6" font-weight="700" fill="#1f1f1f">$</text></svg>
<svg style="left:1455px;top:590px" width="33" height="32" viewBox="0 0 33 32"><g fill="none" stroke="#1f1f1f" stroke-width="1.9" stroke-linecap="round"><path d="M3.1 6H7M13.2 6H31M3.1 15.8H20.3M26.5 15.8H31M3.1 25.6H11.3M17.5 25.6H31"/><circle cx="10.1" cy="6" r="3.1" stroke-width="2"/><circle cx="23.4" cy="15.8" r="3.1" stroke-width="2"/><circle cx="14.4" cy="25.6" r="3.1" stroke-width="2"/></g></svg>
<div class="a" style="left:624px;top:649px;width:494px;height:78px;background:#fafafa;border-radius:3px 0 0 3px;box-shadow:0 2px 3px rgba(0,0,0,.2),0 1px 1px rgba(0,0,0,.1)"></div>
<div class="a" style="left:1116px;top:640px;width:508px;height:94px;background:#71bdf7"></div>
<div class="a" style="left:1122px;top:646px;width:496px;height:82px;background:#fff;border-bottom:4px solid #306c53"></div>
<div class="t" style="top:675.6px;font-size:17.7px;line-height:23px;color:#3b3b3b;letter-spacing:2.02px;left:784.5px;transform:scaleX(0.9300);transform-origin:left center;">PENDING /</div>
<div class="t" style="top:675.6px;font-size:17.7px;line-height:23px;color:#3b3b3b;letter-spacing:1.50px;left:917.8px;transform:scaleX(0.9300);transform-origin:left center;">ACTIVE</div>
<div class="t" style="top:675.6px;font-size:17.7px;line-height:23px;color:#306c53;letter-spacing:1.72px;left:1325.0px;transform:scaleX(0.9300);transform-origin:left center;">HISTORICAL</div>
<svg style="left:759px;top:677.6px" width="17" height="17" viewBox="0 0 17 17"><circle cx="8.60" cy="1.90" r="1.55" fill="#3a3a3a"/><circle cx="13.20" cy="3.80" r="2.0" fill="#3a3a3a"/><circle cx="15.10" cy="8.40" r="0.8" fill="#3a3a3a"/><circle cx="13.20" cy="13.00" r="0.85" fill="#3a3a3a"/><circle cx="8.60" cy="14.90" r="0.9" fill="#3a3a3a"/><circle cx="4.00" cy="13.00" r="1.0" fill="#3a3a3a"/><circle cx="2.10" cy="8.40" r="1.1" fill="#3a3a3a"/><circle cx="4.00" cy="3.80" r="1.3" fill="#3a3a3a"/></svg>
<svg style="left:892px;top:679.6px" width="17" height="14" viewBox="0 0 17 14"><path d="M2 6.6L6.4 10.8L14.8 2.4" fill="none" stroke="#3a3a3a" stroke-width="3.1" stroke-linejoin="miter"/></svg>
<svg style="left:1298px;top:676px" width="19" height="20" viewBox="0 0 19 20"><g fill="none" stroke="#306c53" stroke-linejoin="round" stroke-linecap="round"><rect x="1.95" y="5.05" width="15.3" height="13.3" rx="1.5" stroke-width="1.3"/><rect x="1.9" y="5" width="15.4" height="2.3" fill="#306c53" stroke-width="1"/><path d="M5 5.4V3.3Q5 1.7 6.2 1.7Q7.4 1.7 7.4 3.3V5.4M12.3 5.4V3.3Q12.3 1.7 13.5 1.7Q14.7 1.7 14.7 3.3V5.4" stroke-width="1.3" fill="#fff"/><path d="M6.2 12.6L8.6 15.2L13.6 10.6" stroke-width="1.5"/></g></svg>
<div class="a" style="left:421px;top:757px;width:1400px;height:61px;background:#fff;border-radius:3px 3px 0 0"></div>
<div class="t" style="top:775.9px;font-size:21.6px;line-height:28px;color:#6c6c6c;letter-spacing:1.68px;left:1016.8px;transform:scaleX(0.9300);transform-origin:left center;-webkit-text-stroke:.8px #6c6c6c;">HISTORICAL GIFTS</div>
<div class="t" style="top:845.2px;font-size:19px;line-height:25px;color:#606060;letter-spacing:1.15px;left:438.8px;transform:scaleX(0.9000);transform-origin:left center;-webkit-text-stroke:.6px #606060;">SEARCH:</div>
<div class="a" style="left:529px;top:819px;width:300px;height:78px;background:#fff;border:1px solid #d9d9d9;border-radius:5px"></div>
<div class="a" style="left:421px;top:915px;width:1400px;height:285px;background:#fff;border:1px solid #d6d6d6;box-shadow:0 1px 3px rgba(0,0,0,.28)"></div>
<div class="a" style="left:422px;top:916px;width:1398px;height:68px;background:#f1f1f1"></div>
<div class="a" style="left:422px;top:984px;width:1398px;height:3px;background:#dadada"></div>
<div class="a" style="left:422px;top:987px;width:1398px;height:105px;background:#f9f9f9"></div>
<div class="a" style="left:422px;top:1092px;width:1398px;height:2px;background:#dedede"></div>
<div class="a" style="left:604px;top:916px;width:2px;height:283px;background:#dcdcdc"></div>
<div class="a" style="left:782px;top:916px;width:2px;height:283px;background:#dcdcdc"></div>
<div class="a" style="left:964.5px;top:916px;width:2px;height:283px;background:#dcdcdc"></div>
<div class="a" style="left:1183px;top:916px;width:2px;height:283px;background:#dcdcdc"></div>
<div class="a" style="left:1381px;top:916px;width:2px;height:283px;background:#dcdcdc"></div>
<div class="a" style="left:1617.5px;top:916px;width:2px;height:283px;background:#dcdcdc"></div>
<div class="t" style="top:949.3px;font-size:19px;line-height:25px;color:#9b9b9b;letter-spacing:0.75px;left:469.0px;transform:scaleX(0.8900);transform-origin:left center;-webkit-text-stroke:.8px #9b9b9b;">ACCOUNT</div>
<div class="t" style="top:949.3px;font-size:19px;line-height:25px;color:#9b9b9b;letter-spacing:1.21px;left:654.0px;transform:scaleX(0.8900);transform-origin:left center;-webkit-text-stroke:.8px #9b9b9b;">AMOUNT</div>
<div class="t" style="top:949.3px;font-size:19px;line-height:25px;color:#9b9b9b;letter-spacing:0.34px;left:819.1px;transform:scaleX(0.8900);transform-origin:left center;-webkit-text-stroke:.8px #9b9b9b;">FREQUENCY</div>
<div class="t" style="top:949.3px;font-size:19px;line-height:25px;color:#9b9b9b;letter-spacing:1.21px;left:1039.0px;transform:scaleX(0.8900);transform-origin:left center;-webkit-text-stroke:.8px #9b9b9b;">STATUS</div>
<div class="t" style="top:949.3px;font-size:19px;line-height:25px;color:#9b9b9b;letter-spacing:0.56px;left:1233.1px;transform:scaleX(0.8900);transform-origin:left center;-webkit-text-stroke:.8px #9b9b9b;">RESPONSE</div>
<div class="t" style="top:949.3px;font-size:19px;line-height:25px;color:#9b9b9b;letter-spacing:1.30px;left:1425.1px;transform:scaleX(0.8900);transform-origin:left center;-webkit-text-stroke:.8px #9b9b9b;">LAST GIFT DATE</div>
<div class="t" style="top:949.3px;font-size:19px;line-height:25px;color:#9b9b9b;letter-spacing:1.02px;left:1679.0px;transform:scaleX(0.8900);transform-origin:left center;-webkit-text-stroke:.8px #9b9b9b;">ACTIONS</div>
<div class="t" style="top:1013.6px;font-size:21.8px;line-height:28px;color:#3a3a3a;letter-spacing:1.76px;left:652.0px;transform:scaleX(0.9300);transform-origin:left center;-webkit-text-stroke:.3px #3a3a3a;">$230.00</div>
<div class="t" style="top:1013.6px;font-size:21.8px;line-height:28px;color:#3a3a3a;letter-spacing:2.30px;left:831.1px;transform:scaleX(0.9300);transform-origin:left center;-webkit-text-stroke:.3px #3a3a3a;">Monthly</div>
<div class="t" style="top:1013.6px;font-size:21.8px;line-height:28px;color:#3a3a3a;letter-spacing:2.14px;left:1017.1px;transform:scaleX(0.9300);transform-origin:left center;-webkit-text-stroke:.3px #3a3a3a;">Completed</div>
<div class="t" style="top:1013.6px;font-size:21.8px;line-height:28px;color:#3a3a3a;letter-spacing:1.66px;left:1443.0px;transform:scaleX(0.9300);transform-origin:left center;-webkit-text-stroke:.3px #3a3a3a;">Apr 3 2023</div>
<div class="t" style="top:1121.0px;font-size:21.8px;line-height:28px;color:#3a3a3a;letter-spacing:1.82px;left:468.1px;transform:scaleX(0.9300);transform-origin:left center;-webkit-text-stroke:.3px #3a3a3a;">Example</div>
<div class="t" style="top:1121.0px;font-size:21.8px;line-height:28px;color:#3a3a3a;letter-spacing:1.74px;left:658.0px;transform:scaleX(0.9300);transform-origin:left center;-webkit-text-stroke:.3px #3a3a3a;">$51.80</div>
<div class="t" style="top:1121.0px;font-size:21.8px;line-height:28px;color:#3a3a3a;letter-spacing:1.25px;left:838.0px;transform:scaleX(0.9300);transform-origin:left center;-webkit-text-stroke:.3px #3a3a3a;">Weekly</div>
<div class="t" style="top:1121.0px;font-size:21.8px;line-height:28px;color:#3a3a3a;letter-spacing:1.89px;left:1025.1px;transform:scaleX(0.9300);transform-origin:left center;-webkit-text-stroke:.3px #3a3a3a;">Canceled</div>
<div class="t" style="top:1121.0px;font-size:21.8px;line-height:28px;color:#3a3a3a;letter-spacing:0.55px;left:1233.0px;transform:scaleX(0.9300);transform-origin:left center;-webkit-text-stroke:.3px #3a3a3a;">0 - OK OK</div>
<div class="a" style="left:508.0px;top:1027.0px;width:14px;height:2px;border-radius:1px;background:#696969"></div>
<div class="a" style="left:1277.5px;top:1027.0px;width:14px;height:2px;border-radius:1px;background:#696969"></div>
<div class="a" style="left:1495.0px;top:1133.5px;width:14px;height:2px;border-radius:1px;background:#696969"></div>
<div class="a" style="left:1668px;top:1013.4px;width:103px;height:52.5px;border-radius:6px;background:#d4d4d4"></div>
<div class="t" style="top:1024.8px;font-size:22.4px;line-height:29px;color:#333;left:1686.9px;transform:scaleX(0.9382);transform-origin:left center;-webkit-text-stroke:.3px #333;">Details</div>
<div class="a" style="left:1668px;top:1120px;width:103px;height:52.5px;border-radius:6px;background:#d4d4d4"></div>
<div class="t" style="top:1131.4px;font-size:22.4px;line-height:29px;color:#333;left:1686.9px;transform:scaleX(0.9382);transform-origin:left center;-webkit-text-stroke:.3px #333;">Details</div>
<div class="a" style="left:962px;top:1092px;width:220px;height:110px;border:6px solid #71bdf7"></div>
<div class="a" style="left:859px;top:1227px;width:525px;height:87px;border-radius:3px;background:#306c53;box-shadow:0 2px 3px rgba(0,0,0,.3)"></div>
<div class="t" style="top:1258.8px;font-size:18.6px;line-height:24px;color:#fff;letter-spacing:1.45px;left:1032.0px;transform:scaleX(0.9300);transform-origin:left center;">CREATE NEW GIFT</div>
<div class="t" style="top:1349.7px;font-size:25.3px;line-height:33px;color:#2d2d2d;left:1054.3px;transform:scaleX(0.9652);transform-origin:left center;-webkit-text-stroke:.3px #2d2d2d;">First Church</div>
<div class="t" style="top:1386.1px;font-size:21.8px;line-height:28px;color:#7a7a7a;letter-spacing:0.21px;left:1029.1px;transform:scaleX(0.9300);transform-origin:left center;">234 Pine Glen Rd</div>
<div class="a" style="left:1925px;top:1262px;width:140px;height:105px;border-radius:3px;background:#f9f9f9;box-shadow:0 0 5px rgba(0,0,0,.45)"></div>
<svg style="left:1953px;top:1273px" width="66" height="66" viewBox="0 0 66 66"><path d="M33 1.2H7.2L13.6 7.6A32 32 0 0 0 1 33H17.6A15.4 15.4 0 0 1 24.8 20L33 26.8Z" fill="#5d8ee8"/><path d="M33 1.2A32 32 0 0 1 57.4 12.4L64.6 6.2V33H38.6L46.4 26.2A15.4 15.4 0 0 0 33 17.6Z" fill="#2a3a9e"/><path d="M1 33H27.6L20.4 39.6A15.4 15.4 0 0 0 46.6 42.4L58 52.8A32 32 0 0 1 7.4 52L1 59.4Z" fill="#b8b8b8"/></svg>
<div class="t" style="top:1343.5px;font-size:14.5px;line-height:19px;color:#555;left:1937.1px;transform:scaleX(0.9303);transform-origin:left center;">Privacy</div>
<div class="t" style="top:1343.5px;font-size:14.5px;line-height:19px;color:#555;left:1988.0px;">-</div>
<div class="t" style="top:1343.5px;font-size:14.5px;line-height:19px;color:#555;left:1998.0px;transform:scaleX(0.9431);transform-origin:left center;">Terms</div>
</div>
</body></html>
